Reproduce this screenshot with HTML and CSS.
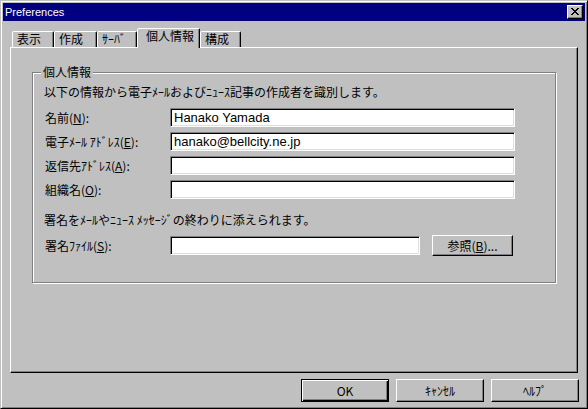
FILE: index.html
```html
<!DOCTYPE html>
<html lang="ja">
<head>
<meta charset="utf-8">
<title>Preferences</title>
<link rel="stylesheet" href="styles.css">
</head>
<body>
<div class="window">
  <div class="titlebar">
    <span class="title">Preferences</span>
    <div class="close" role="button" aria-label="閉じる">
      <svg width="8" height="7" viewBox="0 0 8 7" shape-rendering="crispEdges"><path fill="#000" d="M0 0h2v1h-2z M6 0h2v1h-2z M1 1h2v1h-2z M5 1h2v1h-2z M2 2h4v1h-4z M3 3h2v1h-2z M2 4h4v1h-4z M1 5h2v1h-2z M5 5h2v1h-2z M0 6h2v1h-2z M6 6h2v1h-2z"/></svg>
    </div>
  </div>
  <div class="body">
    <div class="tabs">
      <div class="tab tab-1">表示</div>
      <div class="tab tab-2">作成</div>
      <div class="tab tab-3">ｻｰﾊﾞ</div>
      <div class="tab tab-active">個人情報</div>
      <div class="tab tab-5">構成</div>
    </div>
    <div class="panel">
      <div class="group">
        <span class="legend">個人情報</span>
        <p class="intro">以下の情報から電子ﾒｰﾙおよびﾆｭｰｽ記事の作成者を識別します。</p>
        <div class="fields">
          <div class="row"><label class="label">名前(<u>N</u>):</label><input class="field" type="text" value="Hanako Yamada"></div>
          <div class="row"><label class="label">電子ﾒｰﾙ ｱﾄﾞﾚｽ(<u>E</u>):</label><input class="field" type="text" value="hanako@bellcity.ne.jp"></div>
          <div class="row"><label class="label">返信先ｱﾄﾞﾚｽ(<u>A</u>):</label><input class="field" type="text" value=""></div>
          <div class="row"><label class="label">組織名(<u>O</u>):</label><input class="field" type="text" value=""></div>
        </div>
        <p class="note">署名をﾒｰﾙやﾆｭｰｽ ﾒｯｾｰｼﾞの終わりに添えられます。</p>
        <div class="row sig-row"><label class="label">署名ﾌｧｲﾙ(<u>S</u>):</label><input class="field field-short" type="text" value=""><button class="btn btn-browse">参照(<u>B</u>)...</button></div>
      </div>
    </div>
    <div class="buttons">
      <button class="btn btn-default">OK</button>
      <button class="btn">ｷｬﾝｾﾙ</button>
      <button class="btn">ﾍﾙﾌﾟ</button>
    </div>
  </div>
</div>
</body>
</html>
```
FILE: styles.css
```css
html, body {
  margin: 0;
  padding: 0;
  background: #c0c0c0;
  overflow: hidden;
}

.window {
  width: 588px;
  height: 409px;
  box-sizing: border-box;
  background: #c0c0c0;
  border: 1px solid;
  border-color: #c0c0c0 #000 #000 #c0c0c0;
  box-shadow: inset 1px 1px #fff, inset -1px -1px #808080;
  padding: 2px;
  display: flex;
  flex-direction: column;
  color: #000;
  font: 12px/14px "Noto Sans CJK JP", sans-serif;
}

.titlebar {
  height: 18px;
  flex: none;
  background: #000080;
  color: #fff;
  display: flex;
  align-items: flex-start;
}

.title {
  font: 11px/17px "Liberation Sans", Arial, sans-serif;
  padding: 1px 0 0 2px;
}

.close {
  margin: 2px 2px 0 auto;
  width: 16px;
  height: 14px;
  box-sizing: border-box;
  padding: 2px 0 0 3px;
  background: #c0c0c0;
  border: 1px solid;
  border-color: #fff #000 #000 #fff;
  box-shadow: inset -1px -1px #808080;
}

.close svg {
  display: block;
}

.body {
  flex: 1;
  padding: 0 7px;
  display: flex;
  flex-direction: column;
}

.tabs {
  display: flex;
  align-items: flex-end;
  height: 19px;
  margin: 7px 0 0 2px;
}

.tab {
  box-sizing: border-box;
  height: 16px;
  border: 1px solid;
  border-bottom: none;
  border-color: #fff #000 transparent #fff;
  border-radius: 2px 2px 0 0;
  box-shadow: inset -1px 0 #808080;
  padding-left: 4px;
  white-space: nowrap;
  background: #c0c0c0;
}

.tab-1 { width: 42px; }
.tab-2 { width: 43px; }
.tab-3 { width: 40px; }
.tab-5 { width: 41px; }

.tab-active {
  width: 63px;
  height: 20px;
  margin-bottom: -1px;
  padding-left: 8px;
  position: relative;
  z-index: 1;
}

.panel {
  height: 326px;
  flex: none;
  box-sizing: border-box;
  border: 1px solid;
  border-color: #fff #000 #000 #fff;
  box-shadow: inset -1px -1px #808080;
  padding: 24px 0 0 21px;
}

.group {
  position: relative;
  box-sizing: border-box;
  width: 524px;
  height: 211px;
  border: 1px solid #808080;
  box-shadow: 1px 1px 0 #fff, inset 1px 1px 0 #fff;
  padding: 12px 0 0 11px;
}

.legend {
  position: absolute;
  top: -8px;
  left: 8px;
  padding: 0 2px;
  background: #c0c0c0;
}

.intro,
.note {
  margin: 0;
  white-space: nowrap;
}

.fields {
  margin-top: 9px;
  display: flex;
  flex-direction: column;
  gap: 5px;
}

.row {
  display: flex;
  align-items: center;
  height: 19px;
}

.label {
  width: 126px;
  flex: none;
  box-sizing: border-box;
  padding-left: 1px;
  white-space: nowrap;
}

.field {
  box-sizing: border-box;
  width: 345px;
  height: 19px;
  flex: none;
  margin: 0;
  border: 1px solid;
  border-color: #808080 #fff #fff #808080;
  box-shadow: inset 1px 1px #000, inset -1px -1px #dfdfdf;
  background: #fff;
  padding: 0 0 0 3px;
  font: 13px "Liberation Sans", Arial, sans-serif;
  color: #000;
  outline: none;
  appearance: none;
  border-radius: 0;
}

.field-short {
  width: 250px;
}

.note {
  margin-top: 14px;
}

.sig-row {
  margin-top: 8px;
  height: 21px;
}

.btn {
  box-sizing: border-box;
  margin: 0;
  padding: 0;
  background: #c0c0c0;
  border: 1px solid;
  border-color: #fff #000 #000 #fff;
  border-radius: 0;
  box-shadow: inset -1px -1px #808080;
  font: 12px/14px "Noto Sans CJK JP", sans-serif;
  color: #000;
  white-space: nowrap;
}

.btn-browse {
  width: 81px;
  height: 21px;
  margin-left: 12px;
  flex: none;
}

.buttons {
  display: flex;
  justify-content: flex-end;
  gap: 7px;
  margin: 6px -1px 0 0;
}

.buttons .btn {
  width: 88px;
  height: 23px;
}

.btn-default {
  border-color: #000;
  box-shadow: inset 1px 1px #fff, inset -1px -1px #000, inset -2px -2px #808080;
}
```
